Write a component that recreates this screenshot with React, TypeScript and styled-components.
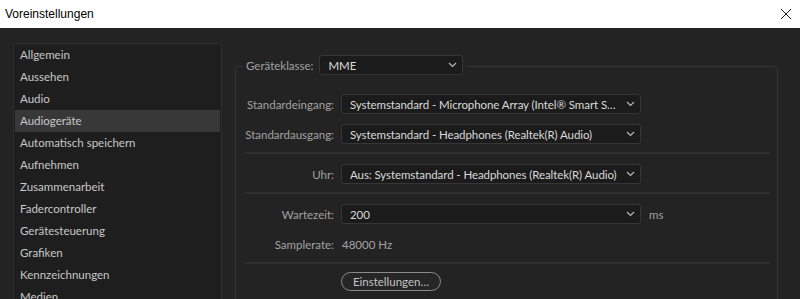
import React from "react";
import styled, { createGlobalStyle } from "styled-components";

const GlobalStyle = createGlobalStyle`
    html, body {
        margin: 0;
        padding: 0;
        background: #232323;
    }
`;

const Window = styled.div`
    width: 800px;
    height: 299px;
    overflow: hidden;
    display: flex;
    flex-direction: column;
    background: #232323;
    font-family: Lato, "Open Sans", sans-serif;
    font-size: 11.5px;
`;

const TitleBar = styled.div`
    height: 28px;
    flex: 0 0 28px;
    background: #ffffff;
    display: flex;
    align-items: center;
    justify-content: space-between;
    padding: 0 7px 0 5px;
    font-family: "Liberation Sans", Arial, sans-serif;
    font-size: 12px;
    color: #000000;
`;

const CloseButton = styled.div`
    width: 14px;
    height: 14px;
    display: flex;
    align-items: center;
    justify-content: center;
`;

const Body = styled.div`
    flex: 1;
    display: flex;
    align-items: flex-start;
    gap: 13px;
    padding: 15px 22px 0 13px;
`;

const Sidebar = styled.ul`
    width: 209px;
    box-sizing: border-box;
    margin: 0;
    padding: 0 1px;
    list-style: none;
    background: #1e1e1e;
    border: 1px solid #2f2f2f;
    border-radius: 3px;
`;

const SidebarItem = styled.li<{ active?: boolean }>`
    height: 22px;
    line-height: 22px;
    padding-left: 5px;
    color: #c8c8c8;
    background: ${({ active }) => (active ? "#383838" : "transparent")};
    white-space: nowrap;
`;

const Group = styled.fieldset`
    flex: 1;
    margin: 12px 0 0;
    padding: 0;
    min-width: 0;
    border: 1px solid #353535;
    border-radius: 3px;
    height: 400px;
`;

const Legend = styled.legend`
    margin-left: 7px;
    padding: 0 3px 3px;
    display: flex;
    align-items: center;
    gap: 6px;
    color: #a2a2a2;
`;

const Content = styled.div`
    padding: 16px 7px 0 9px;
`;

const Row = styled.div`
    display: grid;
    grid-template-columns: 89px 300px auto;
    column-gap: 7px;
    align-items: center;
    height: 20px;
    & + & {
        margin-top: 10px;
    }
`;

const Label = styled.span`
    text-align: right;
    color: #a2a2a2;
    white-space: nowrap;
`;

const Value = styled.span`
    color: #a2a2a2;
    padding-left: 1px;
`;

const Unit = styled.span`
    color: #a2a2a2;
    padding-left: 1px;
`;

const Select = styled.div<{ width?: number }>`
    box-sizing: border-box;
    width: ${({ width }) => (width ? `${width}px` : "100%")};
    height: 20px;
    display: flex;
    align-items: center;
    justify-content: space-between;
    gap: 5px;
    padding: 0 5px 0 8px;
    background: #1b1b1b;
    border: 1px solid #363636;
    border-radius: 3px;
    color: #dadada;
    letter-spacing: -0.08px;
    white-space: nowrap;

    svg {
        flex-shrink: 0;
    }
`;

const SelectText = styled.span`
    min-width: 0;
    overflow: hidden;
    text-overflow: ellipsis;
`;

const Separator = styled.div`
    height: 2px;
    background: #2f2f2f;
    margin: 8px 0 10px;
`;

const PillButton = styled.button`
    box-sizing: border-box;
    width: 100px;
    height: 19px;
    margin: -2px 0 0 96px;
    padding: 0;
    background: #262626;
    border: 1px solid #8a8a8a;
    border-radius: 10px;
    color: #c4c4c4;
    font-family: inherit;
    font-size: 11.5px;
    line-height: 17px;
`;

const Chevron = () => (
    <svg width="9" height="6" viewBox="0 0 9 6">
        <polyline
            points="1,1 4.5,4.5 8,1"
            fill="none"
            stroke="#b8b8b8"
            strokeWidth="1.2"
        />
    </svg>
);

const navItems = [
    "Allgemein",
    "Aussehen",
    "Audio",
    "Audiogeräte",
    "Automatisch speichern",
    "Aufnehmen",
    "Zusammenarbeit",
    "Fadercontroller",
    "Gerätesteuerung",
    "Grafiken",
    "Kennzeichnungen",
    "Medien",
    "Medien-Cache",
    "Speicher",
];

const App: React.FunctionComponent = () => {
    return (
        <>
            <GlobalStyle />
            <Window>
                <TitleBar>
                    <span>Voreinstellungen</span>
                    <CloseButton>
                        <svg width="12" height="12" viewBox="0 0 12 12">
                            <path
                                d="M1 1 L11 11 M11 1 L1 11"
                                stroke="#1a1a1a"
                                strokeWidth="1"
                            />
                        </svg>
                    </CloseButton>
                </TitleBar>

                <Body>
                    <Sidebar>
                        {navItems.map((item) => (
                            <SidebarItem
                                key={item}
                                active={item === "Audiogeräte"}
                            >
                                {item}
                            </SidebarItem>
                        ))}
                    </Sidebar>

                    <Group>
                        <Legend>
                            <span>Geräteklasse:</span>
                            <Select width={144}>
                                <SelectText>MME</SelectText>
                                <Chevron />
                            </Select>
                        </Legend>

                        <Content>
                            <Row>
                                <Label>Standardeingang:</Label>
                                <Select>
                                    <SelectText>
                                        Systemstandard - Microphone Array
                                        (Intel® Smart Sound Technology)
                                    </SelectText>
                                    <Chevron />
                                </Select>
                            </Row>
                            <Row>
                                <Label>Standardausgang:</Label>
                                <Select>
                                    <SelectText>
                                        Systemstandard - Headphones (Realtek(R)
                                        Audio)
                                    </SelectText>
                                    <Chevron />
                                </Select>
                            </Row>

                            <Separator />

                            <Row>
                                <Label>Uhr:</Label>
                                <Select>
                                    <SelectText>
                                        Aus: Systemstandard - Headphones
                                        (Realtek(R) Audio)
                                    </SelectText>
                                    <Chevron />
                                </Select>
                            </Row>

                            <Separator />

                            <Row>
                                <Label>Wartezeit:</Label>
                                <Select>
                                    <SelectText>200</SelectText>
                                    <Chevron />
                                </Select>
                                <Unit>ms</Unit>
                            </Row>
                            <Row>
                                <Label>Samplerate:</Label>
                                <Value>48000 Hz</Value>
                            </Row>

                            <Separator />

                            <PillButton>Einstellungen…</PillButton>
                        </Content>
                    </Group>
                </Body>
            </Window>
        </>
    );
};

export default App;
